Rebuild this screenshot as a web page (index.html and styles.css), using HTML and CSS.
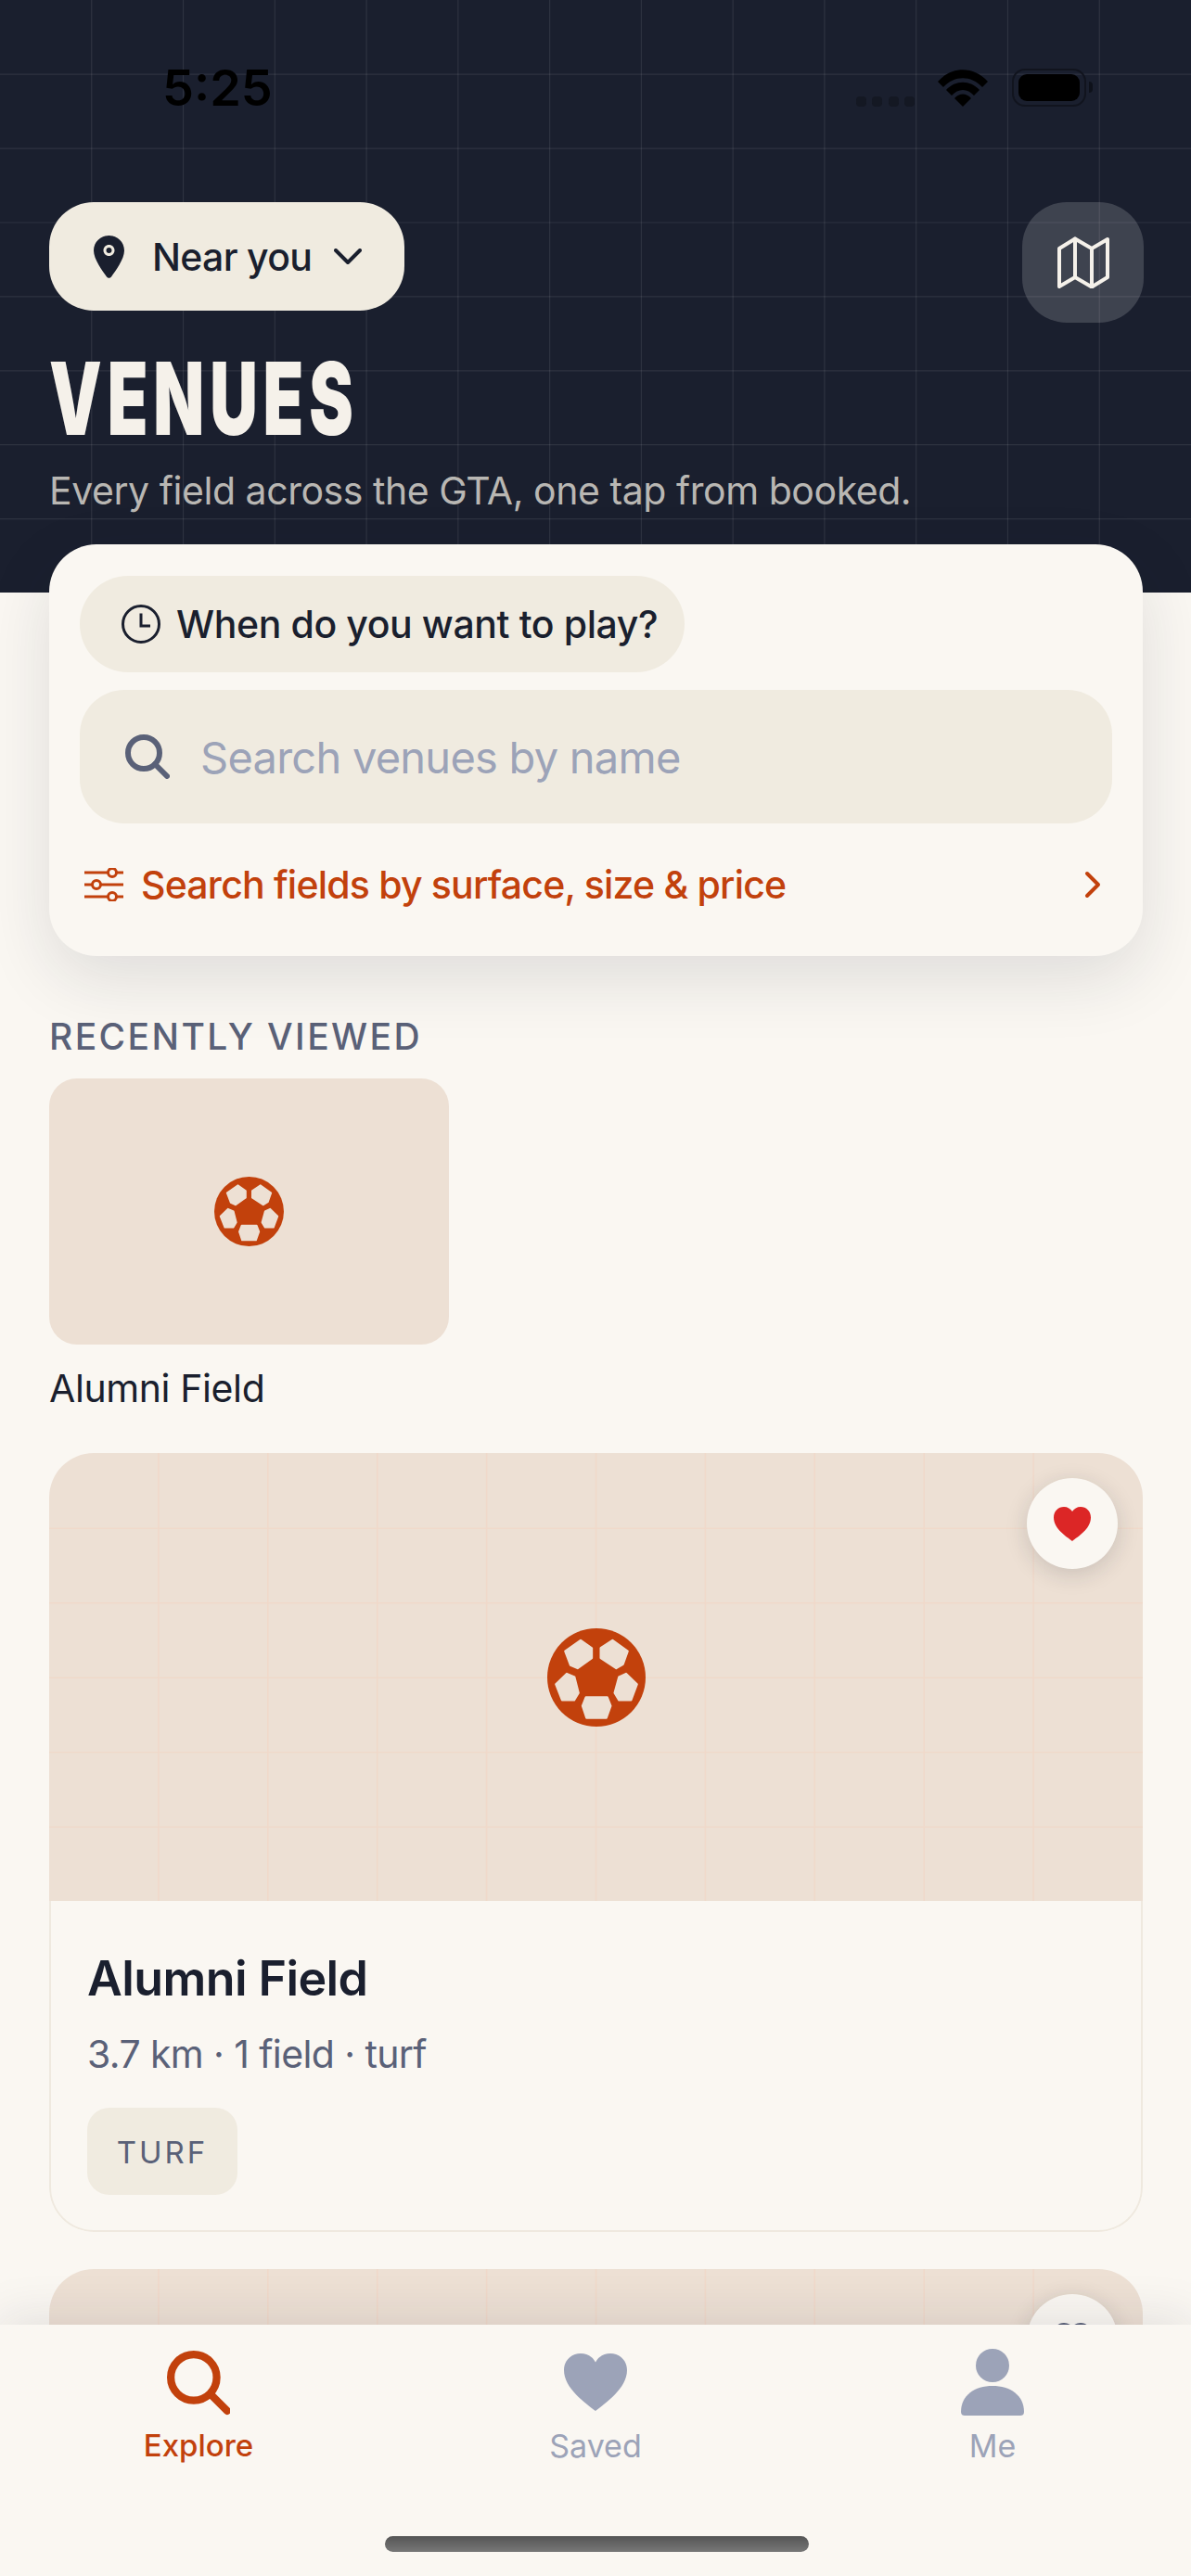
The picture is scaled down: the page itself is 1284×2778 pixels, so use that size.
FILE: index.html
```html
<!DOCTYPE html>
<html lang="en">

<head>
    <meta charset="UTF-8">
    <meta name="viewport" content="width=device-width, initial-scale=1.0">
    <title>Venues</title>
    <link rel="stylesheet" href="styles.css">
</head>

<body>
    <svg class="defs" width="0" height="0">
        <symbol id="ball" viewBox="267 169 318 318">
            <circle cx="426" cy="328" r="159" fill="#C2410C"></circle>
            <g class="ballHoles">
                <polygon points="375,208 411,233 411,265 365,298 342,288 325,243"></polygon>
                <polygon points="478,208 527,243 512,285 490,298 440,265 440,233"></polygon>
                <polygon points="330,316 355,327 368,378 354,401 315,401 295,350"></polygon>
                <polygon points="522,316 557,350 538,401 499,401 485,378 499,327"></polygon>
                <polygon points="392,392 461,392 472,420 458,459 394,459 381,420"></polygon>
            </g>
        </symbol>
        <symbol id="fieldLines" viewBox="0 0 1179 483">
            <path d="M117.9 0V483M235.8 0V483M353.7 0V483M471.6 0V483M589.5 0V483M707.4 0V483M825.3 0V483M943.2 0V483M1061.1 0V483"></path>
            <path d="M0 81.3H1179M0 161.8H1179M0 242.3H1179M0 322.8H1179M0 403.3H1179"></path>
        </symbol>
    </svg>

    <div class="phone">
        <div class="hero">
            <svg class="heroLines" viewBox="0 0 1284 639">
                <path d="M98.77 0V639M197.54 0V639M296.31 0V639M395.08 0V639M493.85 0V639M592.62 0V639M691.39 0V639M790.16 0V639M888.93 0V639M987.7 0V639M1086.47 0V639M1185.24 0V639"></path>
                <path d="M0 80.2H1284M0 160.1H1284M0 240H1284M0 319.9H1284M0 399.8H1284M0 479.7H1284M0 559.6H1284"></path>
            </svg>
            <div class="status">
                <span class="time">5:25</span>
                <div class="statusRight">
                    <div class="signal"><i></i><i></i><i></i><i></i></div>
                    <svg class="wifi" viewBox="0 0 54 40">
                        <path d="M0 13C15-4 39-4 54 13L48 19C36 6 18 6 6 19Z"></path>
                        <path d="M9 22C19 11 35 11 45 22L39 28C32 20 22 20 15 28Z"></path>
                        <path d="M18 31C23 25 31 25 36 31L27 40Z"></path>
                    </svg>
                    <div class="battery"><div class="batteryFill"></div></div>
                    <div class="batteryCap"></div>
                </div>
            </div>
            <div class="heroTop">
                <button class="locationPill">
                    <svg class="pin" viewBox="0 0 33 46">
                        <path fill-rule="evenodd" d="M16.5 0C7.4 0 0 7.2 0 16.2C0 25.5 9.5 38 14 44.5C15.3 46.3 17.7 46.3 19 44.5C23.5 38 33 25.5 33 16.2C33 7.2 25.6 0 16.5 0ZM16.5 10C20 10 22.5 12.7 22.5 16C22.5 19.3 20 22 16.5 22C13 22 10.5 19.3 10.5 16C10.5 12.7 13 10 16.5 10ZM16.5 13C14.8 13 13.5 14.3 13.5 16C13.5 17.7 14.8 19 16.5 19C18.2 19 19.5 17.7 19.5 16C19.5 14.3 18.2 13 16.5 13Z"></path>
                    </svg>
                    <span>Near you</span>
                    <svg class="pillChevron" viewBox="0 0 30 18">
                        <path d="M2 2L15 15L28 2"></path>
                    </svg>
                </button>
                <button class="mapButton">
                    <svg viewBox="0 0 58 56">
                        <path d="M3 13L20 2.5L38 13L55 3V44L38 54.5L20 44L3 54Z"></path>
                        <path d="M20 2.5V44M38 13V54.5"></path>
                    </svg>
                </button>
            </div>
            <h1 class="title">VENUES</h1>
            <p class="subtitle">Every field across the GTA, one tap from booked.</p>
        </div>

        <div class="searchCard">
            <button class="whenPill">
                <svg viewBox="0 0 42 42">
                    <circle cx="21" cy="21" r="19.5"></circle>
                    <path d="M21 9.5V23H31"></path>
                </svg>
                <span>When do you want to play?</span>
            </button>
            <div class="searchBox">
                <svg viewBox="0 0 48 48">
                    <circle cx="20" cy="20" r="17"></circle>
                    <path d="M32 32L45 45"></path>
                </svg>
                <span>Search venues by name</span>
            </div>
            <div class="filterRow">
                <svg class="filterIcon" viewBox="0 0 42 36">
                    <path d="M0 5H25M35 5H42M0 18H8M18 18H42M0 31H25M35 31H42"></path>
                    <circle cx="30" cy="5" r="4.5"></circle>
                    <circle cx="13" cy="18" r="4.5"></circle>
                    <circle cx="30" cy="31" r="4.5"></circle>
                </svg>
                <span>Search fields by surface, size &amp; price</span>
                <svg class="filterChevron" viewBox="0 0 18 30">
                    <path d="M3 3L15 15L3 27"></path>
                </svg>
            </div>
        </div>

        <div class="recent">
            <h2 class="recentTitle">RECENTLY VIEWED</h2>
            <div class="recentThumb">
                <svg class="ballSmall"><use href="#ball"></use></svg>
            </div>
            <p class="recentName">Alumni Field</p>
        </div>

        <div class="venueCard">
            <div class="venueImage">
                <svg class="imageLines"><use href="#fieldLines"></use></svg>
                <svg class="ballBig"><use href="#ball"></use></svg>
                <button class="saveButton">
                    <svg class="heartRed" viewBox="0 0 40 37">
                        <path d="M20 37C14 32 0 24 0 11.5C0 4.5 5 0 11 0C15 0 18 2 20 5C22 2 25 0 29 0C35 0 40 4.5 40 11.5C40 24 26 32 20 37Z"></path>
                    </svg>
                </button>
            </div>
            <div class="venueInfo">
                <h3 class="venueName">Alumni Field</h3>
                <p class="venueMeta">3.7 km · 1 field · turf</p>
                <span class="tag">TURF</span>
            </div>
        </div>

        <div class="venueCard">
            <div class="venueImage">
                <svg class="imageLines"><use href="#fieldLines"></use></svg>
                <svg class="ballBig"><use href="#ball"></use></svg>
                <button class="saveButton">
                    <svg class="heartLine" viewBox="0 0 40 37">
                        <path d="M20 35C14 30 2 23 2 11.5C2 6 6 2 11 2C15 2 18 4 20 8C22 4 25 2 29 2C34 2 38 6 38 11.5C38 23 26 30 20 35Z"></path>
                    </svg>
                </button>
            </div>
        </div>

        <div class="tabBar">
            <div class="tab active">
                <svg viewBox="0 0 66 66">
                    <circle cx="28" cy="28" r="24"></circle>
                    <path d="M46 46L63 63"></path>
                </svg>
                <span>Explore</span>
            </div>
            <div class="tab">
                <svg viewBox="0 0 68 62">
                    <path class="fill" d="M34 62C24 54 0 38 0 18C0 7.5 8 0 18 0C25 0 31 3.5 34 9.5C37 3.5 43 0 50 0C60 0 68 7.5 68 18C68 38 44 54 34 62Z"></path>
                </svg>
                <span>Saved</span>
            </div>
            <div class="tab">
                <svg viewBox="0 0 68 72">
                    <circle class="fill" cx="34" cy="18" r="18"></circle>
                    <path class="fill" d="M0 68C0 50 15 40 34 40C53 40 68 50 68 68C68 71 66 72 64 72H4C2 72 0 71 0 68Z"></path>
                </svg>
                <span>Me</span>
            </div>
            <div class="homeBar"></div>
        </div>
    </div>
</body>

</html>
```

FILE: styles.css
```css
* {
    margin: 0;
    padding: 0;
    box-sizing: border-box;
}

body {
    background-color: #FAF7F2;
    font-family: "Inter", "Noto Sans", sans-serif;
    color: #1A1F2E;
}

button {
    border: none;
    font-family: inherit;
    color: inherit;
}

.defs {
    position: absolute;
}

.ballHoles polygon {
    fill: #EDE0D4;
    stroke: #EDE0D4;
    stroke-width: 7;
    stroke-linejoin: round;
}

.phone {
    width: 1284px;
    height: 2778px;
    overflow: hidden;
    position: relative;
    background-color: #FAF7F2;
}

/* dark header with the faint tile grid */
.hero {
    height: 639px;
    padding: 0 51px 0 53px;
    position: relative;
    background-color: #1A1F2E;
}

.heroLines {
    width: 1284px;
    height: 639px;
    position: absolute;
    top: 0;
    left: 0;
    fill: none;
    stroke: rgba(255, 255, 255, 0.09);
    stroke-width: 1.2;
}

.status {
    height: 218px;
    padding: 74px 0 0 122px;
    position: relative;
    display: flex;
    justify-content: space-between;
}

.time {
    font-size: 54px;
    font-weight: 600;
    line-height: 42px;
    color: #000;
}

.statusRight {
    display: flex;
    align-items: flex-start;
    padding-right: 55px;
}

.signal {
    display: flex;
    gap: 6.5px;
    margin-top: 30px;
    margin-right: 25px;
}

.signal i {
    width: 11px;
    height: 11px;
    border-radius: 4px;
    background-color: #141823;
}

.wifi {
    width: 54px;
    height: 40px;
    margin-top: 1px;
    margin-right: 26px;
    fill: #000;
}

.battery {
    width: 80px;
    height: 41px;
    padding: 4px 5px;
    border: 2px solid #11141E;
    border-radius: 14px;
}

.batteryFill {
    height: 100%;
    border-radius: 9px;
    background-color: #000;
}

.batteryCap {
    width: 4px;
    height: 12px;
    margin: 14px 0 0 3px;
    border-radius: 0 4px 4px 0;
    background-color: #0E111A;
}

.heroTop {
    position: relative;
    display: flex;
    justify-content: space-between;
    align-items: flex-start;
}

.locationPill {
    width: 383px;
    height: 117px;
    padding-left: 48px;
    display: flex;
    align-items: center;
    border-radius: 48px;
    background-color: #F0EBE0;
    font-size: 41px;
    font-weight: 500;
    letter-spacing: -0.7px;
}

.pin {
    width: 33px;
    height: 46px;
    margin-right: 30px;
    fill: #1A1F2E;
}

.pillChevron {
    width: 30px;
    height: 18px;
    margin-left: 24px;
    fill: none;
    stroke: #1A1F2E;
    stroke-width: 4;
    stroke-linecap: round;
    stroke-linejoin: round;
}

.mapButton {
    width: 131px;
    height: 130px;
    display: flex;
    justify-content: center;
    align-items: center;
    border-radius: 48px;
    background-color: rgba(255, 255, 255, 0.16);
}

.mapButton svg {
    width: 58px;
    height: 56px;
    fill: none;
    stroke: #F5F1EA;
    stroke-width: 4;
    stroke-linejoin: round;
    stroke-linecap: round;
}

/* no condensed display face around, so squeeze a heavy one */
.title {
    margin-top: 18px;
    position: relative;
    font-size: 109px;
    line-height: 126px;
    font-weight: 900;
    letter-spacing: 9px;
    white-space: nowrap;
    color: #F5F1EA;
    transform: scaleX(0.655);
    transform-origin: left center;
}

.subtitle {
    margin-top: 10px;
    position: relative;
    font-size: 41px;
    line-height: 54px;
    letter-spacing: -0.45px;
    color: #B9B7B3;
}

/* search card sits over the bottom edge of the header */
.searchCard {
    width: 1179px;
    height: 444px;
    margin: -52px 0 0 53px;
    padding: 34px 33px 0;
    position: relative;
    border-radius: 51px;
    background-color: #FAF7F2;
    box-shadow: 0 24px 72px rgba(26, 31, 46, 0.12);
}

.whenPill {
    height: 104px;
    width: 652px;
    padding-left: 45px;
    display: flex;
    align-items: center;
    border-radius: 52px;
    background-color: #F0EBE0;
    font-size: 41px;
    font-weight: 500;
    letter-spacing: -0.4px;
}

.whenPill svg {
    width: 42px;
    height: 42px;
    margin-right: 17px;
    fill: none;
    stroke: #1A1F2E;
    stroke-width: 3;
}

.searchBox {
    height: 144px;
    margin-top: 19px;
    padding-left: 49px;
    display: flex;
    align-items: center;
    border-radius: 48px;
    background-color: #F0EBE0;
    font-size: 47px;
    letter-spacing: -0.75px;
    color: #9CA3B8;
}

.searchBox svg {
    width: 48px;
    height: 48px;
    margin-right: 33px;
    fill: none;
    stroke: #5A6178;
    stroke-width: 6;
    stroke-linecap: round;
}

.filterRow {
    margin-top: 41px;
    padding-left: 5px;
    height: 50px;
    display: flex;
    align-items: center;
    font-size: 41px;
    font-weight: 500;
    letter-spacing: -0.8px;
    color: #C2410C;
}

.filterIcon {
    width: 42px;
    height: 36px;
    margin-right: 19px;
    fill: none;
    stroke: #C2410C;
    stroke-width: 3;
    stroke-linecap: round;
}

.filterChevron {
    width: 18px;
    height: 30px;
    margin-left: auto;
    margin-right: 12px;
    fill: none;
    stroke: #C2410C;
    stroke-width: 4;
    stroke-linecap: round;
    stroke-linejoin: round;
}

.recent {
    padding: 63px 53px 0;
}

.recentTitle {
    font-size: 39px;
    line-height: 48px;
    font-weight: 500;
    letter-spacing: 2.4px;
    color: #5A6178;
}

.recentThumb {
    width: 431px;
    height: 287px;
    margin-top: 21px;
    display: flex;
    justify-content: center;
    align-items: center;
    border-radius: 30px;
    background-color: #EDE0D4;
}

.ballSmall {
    width: 75px;
    height: 75px;
}

.recentName {
    margin-top: 21px;
    font-size: 41px;
    line-height: 52px;
    letter-spacing: -0.4px;
}

.venueCard {
    width: 1179px;
    margin: 44px 0 0 53px;
    overflow: hidden;
    border-radius: 48px;
}

.venueCard + .venueCard {
    margin-top: 40px;
}

.venueImage {
    height: 483px;
    position: relative;
    display: flex;
    justify-content: center;
    align-items: center;
    background-color: #EDE0D4;
}

.imageLines {
    width: 1179px;
    height: 483px;
    position: absolute;
    top: 0;
    left: 0;
    fill: none;
    stroke: #F0D9CA;
    stroke-width: 1.6;
}

.ballBig {
    width: 106px;
    height: 106px;
    position: relative;
}

/* heart button floats over the tile grid */
.saveButton {
    width: 98px;
    height: 98px;
    position: absolute;
    top: 27px;
    right: 27px;
    display: flex;
    justify-content: center;
    align-items: center;
    border-radius: 50%;
    background-color: #FAF7F2;
    box-shadow: 0 6px 24px rgba(26, 31, 46, 0.16);
}

.saveButton svg {
    width: 40px;
    height: 37px;
}

.heartRed {
    fill: #DC2626;
}

.heartLine {
    fill: none;
    stroke: #5A6178;
    stroke-width: 4;
}

.venueInfo {
    height: 357px;
    padding: 52px 39px 0;
    border: 2px solid #EFE9DF;
    border-top: none;
    border-radius: 0 0 48px 48px;
}

.venueName {
    font-size: 52px;
    line-height: 64px;
    font-weight: 600;
    letter-spacing: -0.6px;
}

.venueMeta {
    margin-top: 23px;
    font-size: 41px;
    line-height: 52px;
    letter-spacing: -0.6px;
    color: #5A6178;
}

.tag {
    display: inline-block;
    width: 162px;
    height: 94px;
    margin-top: 32px;
    border-radius: 24px;
    background-color: #F0EBE0;
    font-size: 33px;
    line-height: 96px;
    letter-spacing: 3px;
    text-align: center;
    color: #5A6178;
}

.tabBar {
    width: 1284px;
    height: 271px;
    position: absolute;
    left: 0;
    bottom: 0;
    padding-top: 26px;
    display: flex;
    background-color: #FAF7F2;
    box-shadow: 0 -8px 48px rgba(26, 31, 46, 0.1);
}

.tab {
    width: 428px;
    display: flex;
    flex-direction: column;
    align-items: center;
    font-size: 34px;
    color: #9CA3B8;
}

.tab svg {
    width: 68px;
    height: 72px;
}

.tab span {
    margin-top: 12px;
}

.tab .fill {
    fill: #9CA3B8;
}

.tab.active {
    font-size: 33px;
    font-weight: 500;
    color: #C2410C;
}

.tab.active svg {
    fill: none;
    stroke: #C2410C;
    stroke-width: 8;
    stroke-linecap: round;
}

.homeBar {
    width: 457px;
    height: 17px;
    position: absolute;
    left: 415px;
    bottom: 26px;
    border-radius: 9px;
    background-image: linear-gradient(#555, #777);
}
```
